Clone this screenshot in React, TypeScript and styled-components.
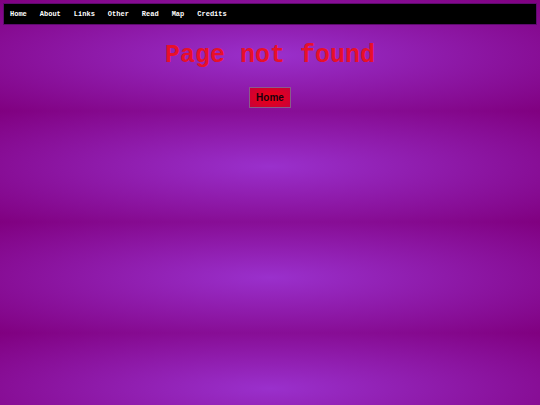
import React from 'react';
import styled, { createGlobalStyle } from 'styled-components';

const GlobalStyle = createGlobalStyle`
  html {
    min-height: 100%;
  }

  body {
    margin: 3px;
    background: radial-gradient(ellipse farthest-corner at center, #9a30cc 0%, #800080 100%);
    background-size: 100% 111px;
    background-repeat: repeat;
    font-family: "Liberation Sans", Arial, sans-serif;
  }
`;

const navItems = ['Home', 'About', 'Links', 'Other', 'Read', 'Map', 'Credits'];

const App: React.FC = () => {
  return (
    <>
      <GlobalStyle />
      <NavBar>
        {navItems.map((item) => (
          <NavLink key={item} href="#">
            {item}
          </NavLink>
        ))}
      </NavBar>
      <Main>
        <Title>Page not found</Title>
        <HomeButton type="button">Home</HomeButton>
      </Main>
    </>
  );
};

const NavBar = styled.nav`
  display: flex;
  align-items: center;
  gap: 13px;
  height: 20px;
  padding: 0 6px;
  background: #000;
  border: 1px solid #5e0a6e;
`;

const NavLink = styled.a`
  font-family: "Liberation Mono", "Courier New", monospace;
  font-weight: bold;
  font-size: 7px;
  color: #fff;
  text-decoration: none;
`;

const Main = styled.main`
  display: flex;
  flex-direction: column;
  align-items: center;
`;

const Title = styled.h1`
  margin: 17px 0 17px;
  font-family: "Liberation Mono", "Courier New", monospace;
  font-weight: bold;
  font-size: 25px;
  line-height: 28px;
  color: #e8102a;
`;

const HomeButton = styled.button`
  height: 21px;
  padding: 0 6px;
  font-family: "Liberation Sans", Arial, sans-serif;
  font-weight: bold;
  font-size: 10px;
  color: #1a0010;
  background: radial-gradient(ellipse at center, #f00010 0%, #c8003a 100%);
  border: 1px solid #8a5a8a;
  border-radius: 0;
  cursor: pointer;
`;

export default App;
